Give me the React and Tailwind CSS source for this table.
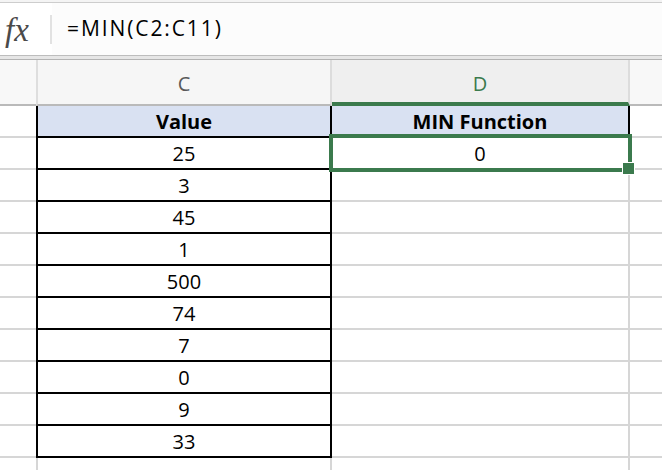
const VALUES = [25, 3, 45, 1, 500, 74, 7, 0, 9, 33];

const GRID = 'border-[#d6d6d6]';
const FONT = { fontFamily: '"Open Sans", "Noto Sans", sans-serif' };

function FormulaBar() {
  return (
    <div className="h-[60px] flex flex-col bg-[#f4f4f4]">
      <div className="h-[2px]" />
      <div className="h-px bg-[#cdcdcd]" />
      <div className="h-[52px] flex items-center bg-white">
        <div className="w-[50px] flex items-center pl-[5px] pt-[3px]">
          <span
            className="text-[33px] italic text-[#4a4a4a] leading-none"
            style={{ fontFamily: '"Liberation Serif", serif' }}
          >
            fx
          </span>
        </div>
        <div className="w-[2px] h-[29px] bg-[#e2e2e2]" />
        <div className="flex-1 h-full flex items-center pl-[15px] bg-[#fcfcfc]">
          <span className="text-[21px] text-black tracking-[1.9px]" style={FONT}>
            =MIN(C2:C11)
          </span>
        </div>
      </div>
      <div className="h-px bg-[#bdbdbd]" />
      <div className="h-[3px] bg-[#e6e6e6]" />
      <div className="h-px bg-[#b3b3b3]" />
    </div>
  );
}

function HeaderRow() {
  return (
    <div className="flex h-[46px]" style={FONT}>
      <div className="w-[36px] bg-[#f8f8f8] border-b-2 border-[#bababa]" />
      <div className="w-[296px] flex items-center justify-center pt-[3px] bg-[#f6f6f6] border-l-2 border-l-[#dedede] border-r-2 border-r-[#dcdcdc] border-b-2 border-b-[#bababa] text-[20px] text-[#595959]">
        C
      </div>
      <div className="w-[298px] flex items-center justify-center pt-[5px] bg-[#efefef] border-r-2 border-r-[#dcdcdc] border-b-4 border-b-[#3b7a4d] text-[20px] text-[#3b7a4d]">
        D
      </div>
      <div className="flex-1 bg-[#f8f8f8] border-b-2 border-[#bababa]" />
    </div>
  );
}

function Row({ c, d, head }) {
  return (
    <div className="flex h-[32px] text-[20px] text-black leading-none" style={FONT}>
      <div className={`w-[36px] border-b-2 ${GRID}`} />
      <div
        className={`w-[296px] flex items-center justify-center pt-[2px] border-l-2 border-r-2 border-b-2 border-black ${
          head ? 'bg-[#d9e1f2] font-bold' : 'bg-white'
        }`}
      >
        {c}
      </div>
      <div
        className={`w-[298px] flex items-center justify-center pt-[2px] border-r-2 border-b-2 ${
          head ? 'bg-[#d9e1f2] font-bold border-black' : GRID
        }`}
      >
        {d}
      </div>
      <div className={`flex-1 border-b-2 ${GRID}`} />
    </div>
  );
}

export default function App() {
  return (
    <div className="w-[662px] h-[470px] overflow-hidden bg-white relative">
      <FormulaBar />
      <HeaderRow />
      <Row c="Value" d="MIN Function" head />
      {VALUES.map((v, i) => (
        <Row key={i} c={v} d={i === 0 ? '0' : ''} />
      ))}
      <div className="flex h-[32px]">
        <div className="w-[36px]" />
        <div className={`w-[296px] border-l-2 border-r-2 ${GRID}`} />
        <div className={`w-[298px] border-r-2 ${GRID}`} />
      </div>

      {/* active cell D2 */}
      <div className="absolute left-[329px] top-[134px] w-[303px] h-[38px] border-4 border-[#3b7a4d]" />
      <div className="absolute left-[622px] top-[162px] w-[13px] h-[13px] bg-[#3b7a4d] border border-white" />
    </div>
  );
}
